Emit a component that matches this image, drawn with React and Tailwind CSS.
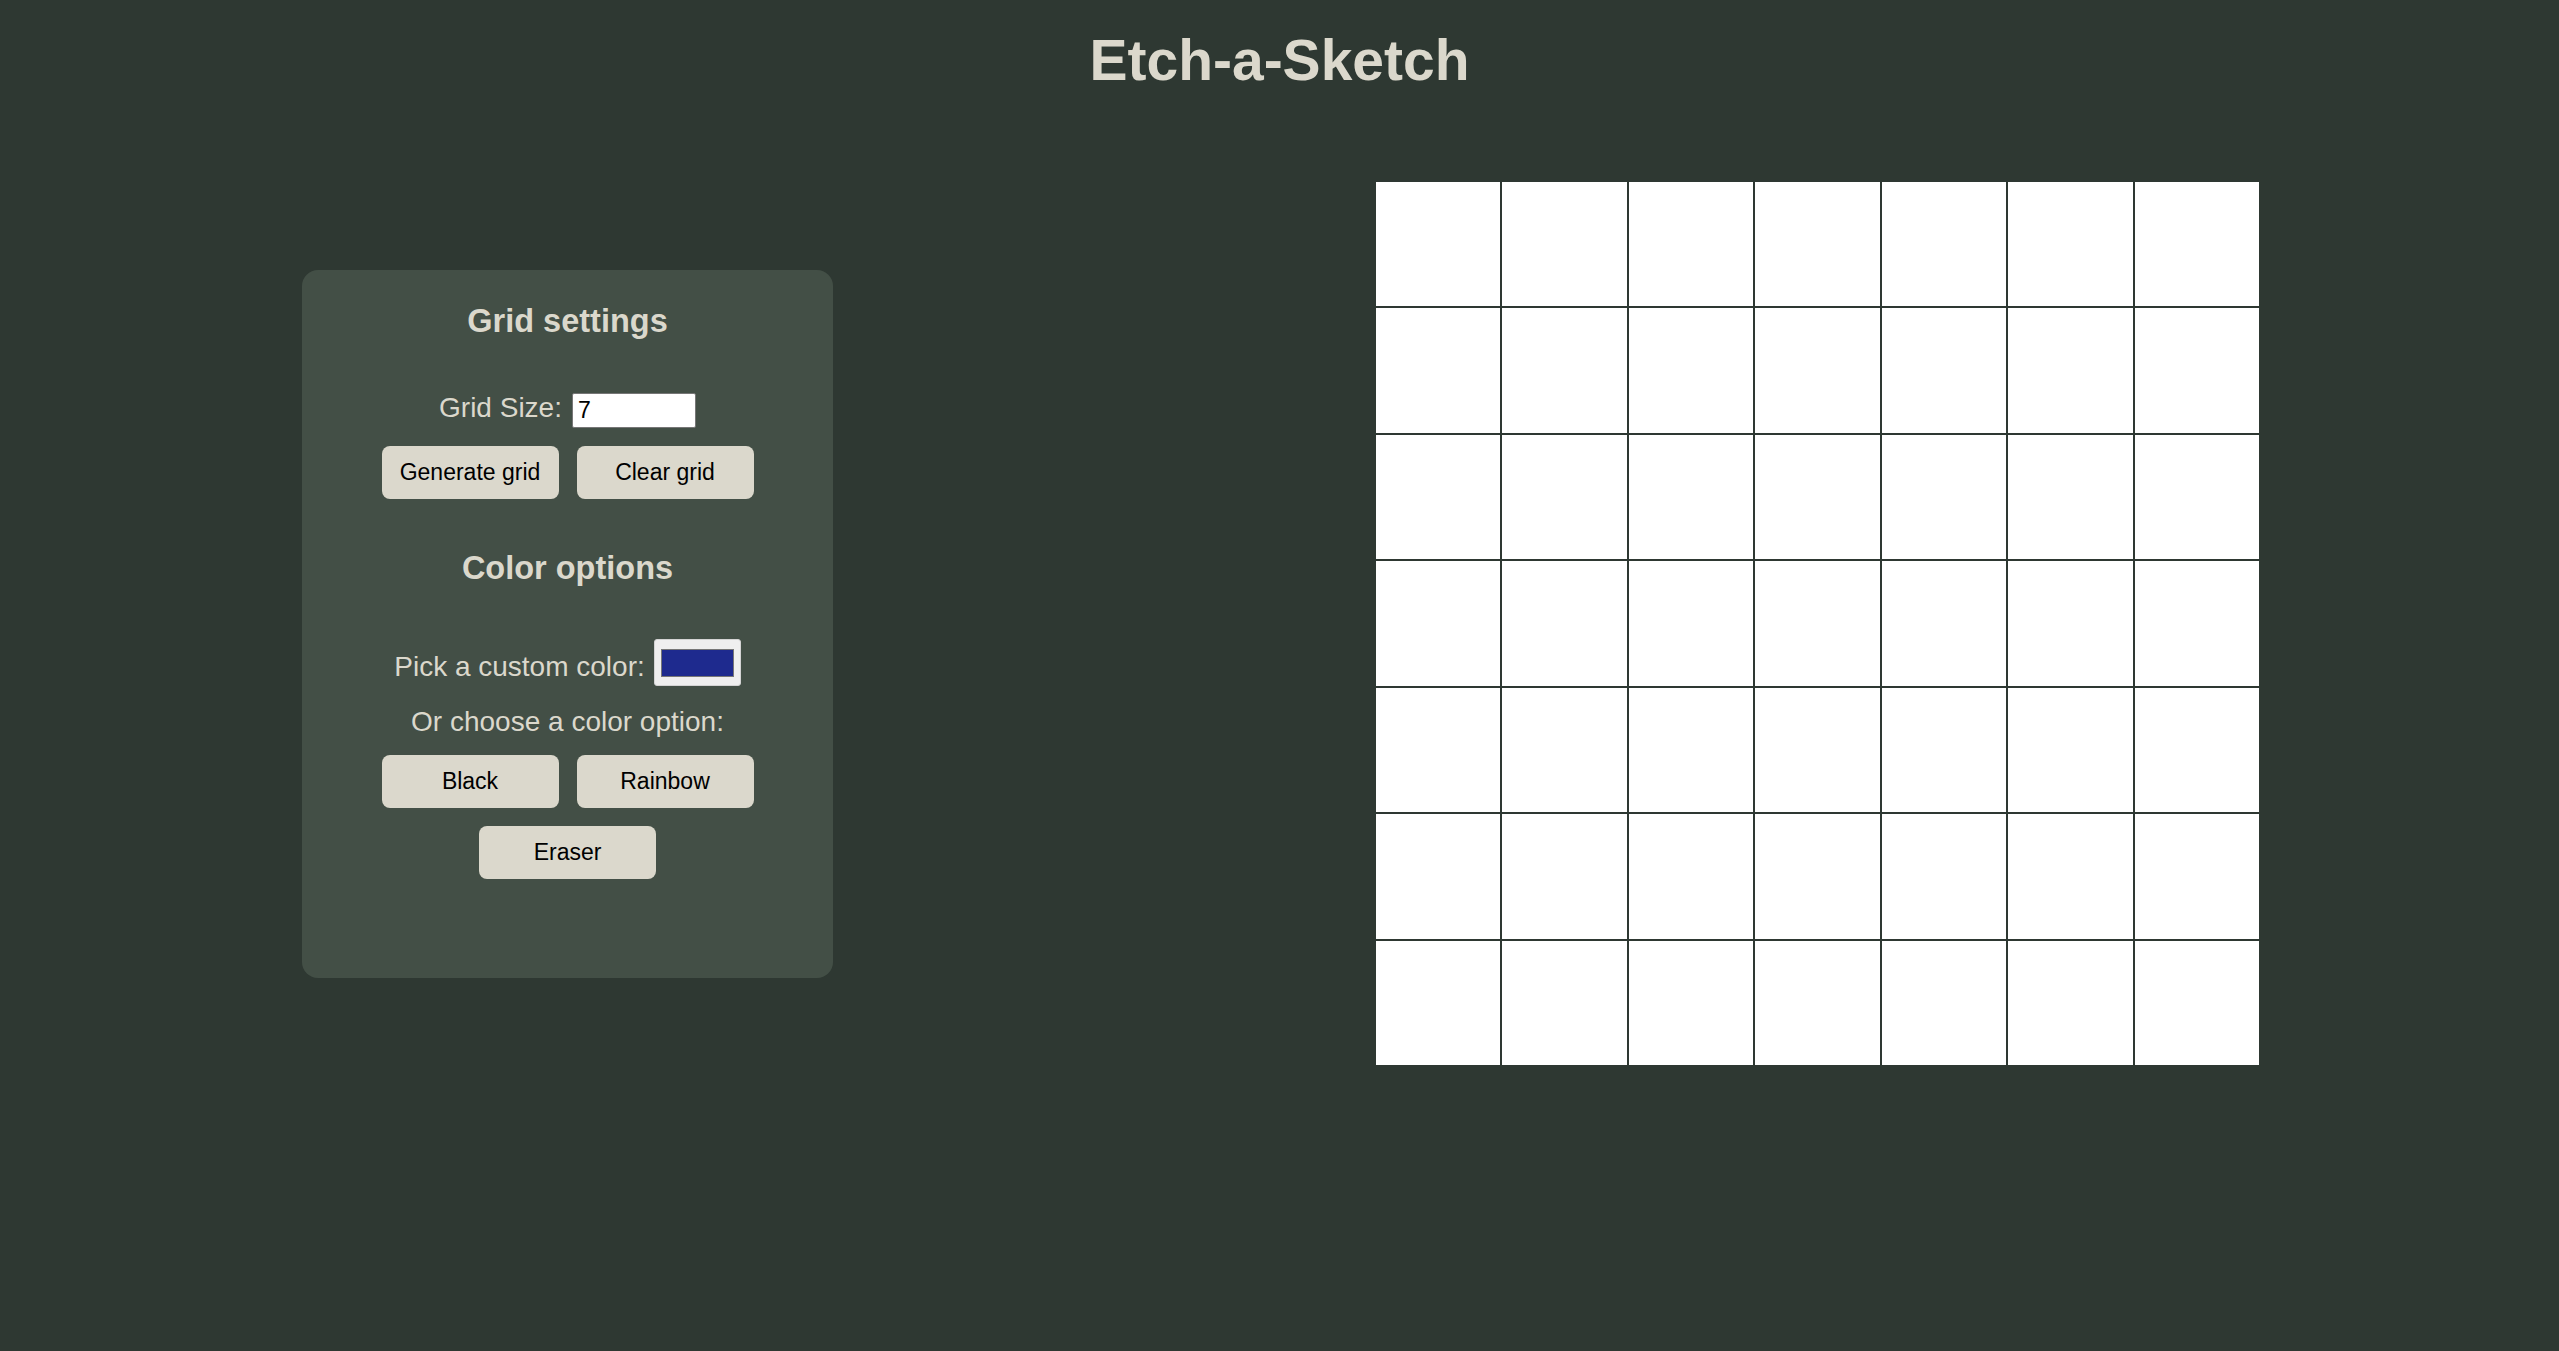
import React from "react";

const SIZE = 7;

const Button = ({ children }) => (
  <button className="w-[177px] h-[53px] rounded-[8px] bg-[#dbd8cc] text-black text-[23px] leading-[27px]">
    {children}
  </button>
);

const App = () => {
  const cells = Array.from({ length: SIZE * SIZE }, (_, i) => i);

  return (
    <div className="min-h-[1351px] w-full bg-[#2e3832] font-['Liberation_Sans',Arial,sans-serif] text-[#dbd8cc]">
      <h1 className="pt-[28px] text-center text-[57px] leading-[65px] font-bold">
        Etch-a-Sketch
      </h1>

      <div className="mt-[88px] flex items-center justify-between pl-[302px] pr-[299px]">
        {/* settings panel */}
        <div className="w-[531px] rounded-[16px] bg-[#434f46] pt-[33px] pb-[99px] flex flex-col items-center">
          <h3 className="text-[32.5px] leading-[37px] font-bold">Grid settings</h3>

          <div className="mt-[52px] flex items-start gap-[10px]">
            <span className="text-[28px] leading-[32px]">Grid Size:</span>
            <input
              type="text"
              defaultValue="7"
              className="mt-[1px] w-[124px] h-[35px] bg-white text-black text-[23px] border border-[#767676] rounded-[2px] px-[5px] outline-none"
            />
          </div>

          <div className="mt-[18px] flex gap-[18px]">
            <Button>Generate grid</Button>
            <Button>Clear grid</Button>
          </div>

          <h3 className="mt-[51px] text-[32.5px] leading-[37px] font-bold">Color options</h3>

          <div className="mt-[52px] flex items-start gap-[9px]">
            <span className="mt-[12px] text-[28px] leading-[32px]">Pick a custom color:</span>
            <div className="w-[87px] h-[47px] rounded-[3px] bg-[#efefef] border border-[#d4d4d4] px-[6px] pt-[9px] pb-[8px]">
              <div className="w-full h-full bg-[#1e2a8e] border border-[#777]" />
            </div>
          </div>

          <p className="mt-[20px] text-[28px] leading-[32px]">Or choose a color option:</p>

          <div className="mt-[17px] flex gap-[18px]">
            <Button>Black</Button>
            <Button>Rainbow</Button>
          </div>
          <div className="mt-[18px]">
            <Button>Eraser</Button>
          </div>
        </div>

        {/* drawing grid */}
        <div className="w-[885px] h-[885px] grid grid-cols-7 grid-rows-7">
          {cells.map((i) => (
            <div key={i} className="bg-white border border-[#2e3832]" />
          ))}
        </div>
      </div>
    </div>
  );
};

export default App;
